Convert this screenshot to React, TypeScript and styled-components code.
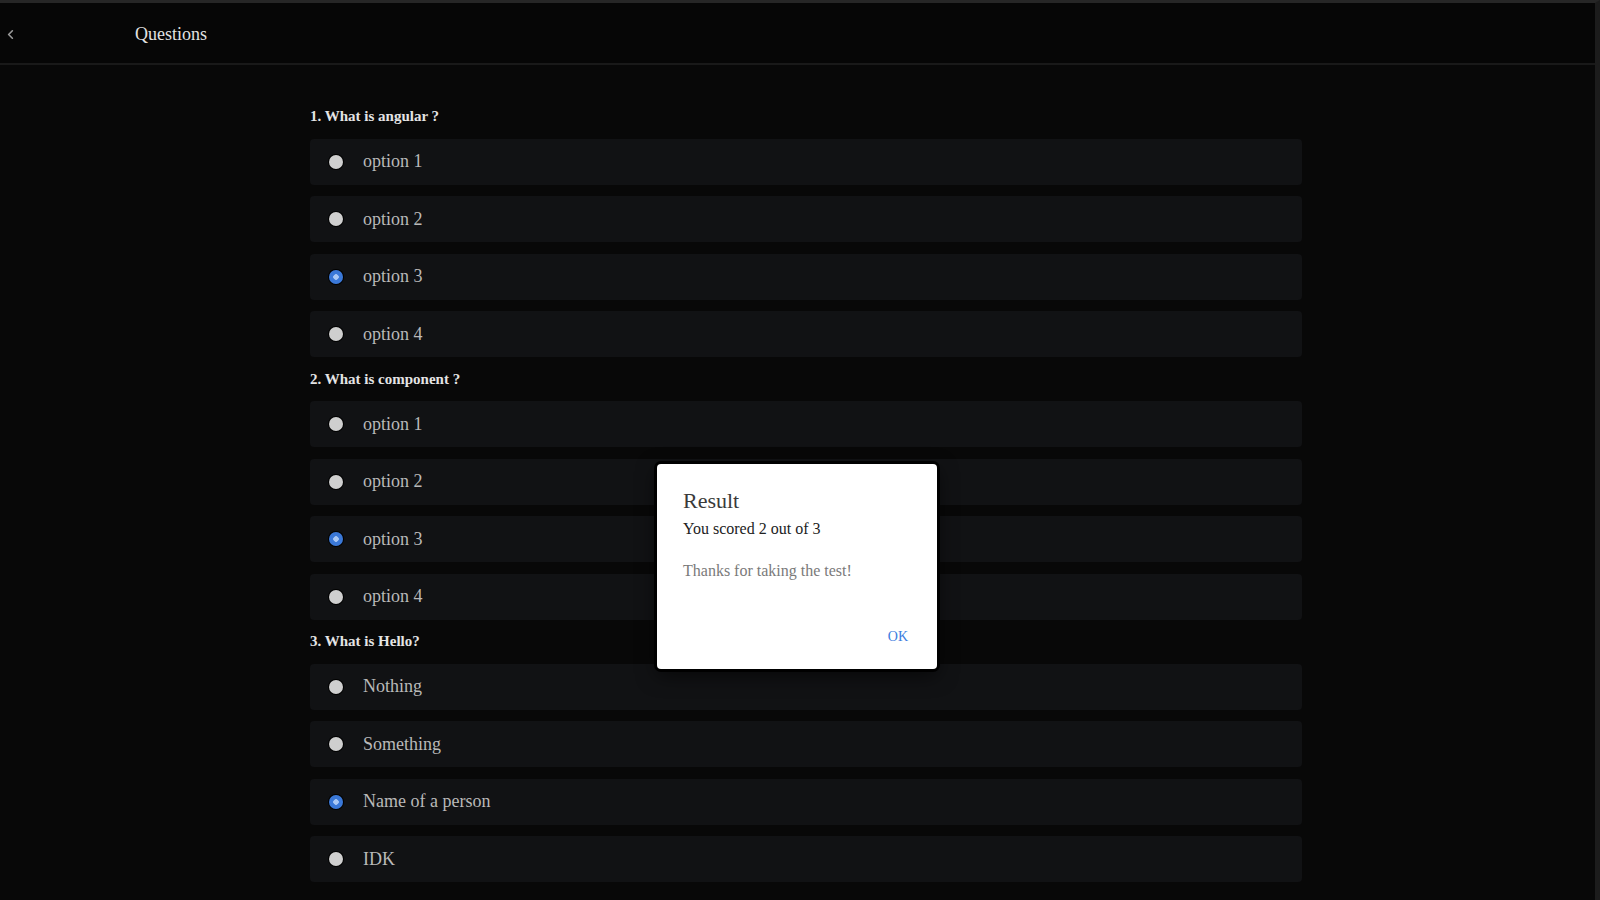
import styled, { createGlobalStyle } from 'styled-components';
import { ChevronLeft } from 'lucide-react';

const GlobalStyle = createGlobalStyle`
  html, body {
    margin: 0;
    padding: 0;
    background: #080808;
  }
  body {
    font-family: "Liberation Serif", "Times New Roman", serif;
  }
`;

type Question = {
  title: string;
  options: string[];
  answer: number;
};

const questions: Question[] = [
  { title: '1. What is angular ?', options: ['option 1', 'option 2', 'option 3', 'option 4'], answer: 2 },
  { title: '2. What is component ?', options: ['option 1', 'option 2', 'option 3', 'option 4'], answer: 2 },
  { title: '3. What is Hello?', options: ['Nothing', 'Something', 'Name of a person', 'IDK'], answer: 2 },
];

const App = () => {
  return (
    <Frame>
      <GlobalStyle />
      <Header>
        <BackButton aria-label="back">
          <ChevronLeft size={15} strokeWidth={2.6} />
        </BackButton>
        <HeaderTitle>Questions</HeaderTitle>
      </Header>
      <Content>
        {questions.map((q) => (
          <QuestionBlock key={q.title}>
            <QuestionTitle>{q.title}</QuestionTitle>
            {q.options.map((opt, i) => (
              <OptionRow key={opt}>
                <Radio type="radio" name={q.title} defaultChecked={i === q.answer} />
                <OptionLabel>{opt}</OptionLabel>
              </OptionRow>
            ))}
          </QuestionBlock>
        ))}
      </Content>
      <Alert role="dialog">
        <AlertTitle>Result</AlertTitle>
        <AlertSubTitle>You scored 2 out of 3</AlertSubTitle>
        <AlertMessage>Thanks for taking the test!</AlertMessage>
        <AlertButtons>
          <AlertButton>OK</AlertButton>
        </AlertButtons>
      </Alert>
    </Frame>
  );
};

export default App;

const Frame = styled.div`
  position: relative;
  width: 1600px;
  height: 900px;
  box-sizing: border-box;
  overflow: hidden;
  background: #080808;
  border-top: 3px solid #262626;
  border-right: 5px solid #1c1c1c;
`;

const Header = styled.header`
  height: 62px;
  box-sizing: border-box;
  padding-top: 2px;
  display: flex;
  align-items: center;
  background: #060606;
  border-bottom: 2px solid #191919;
`;

const BackButton = styled.button`
  width: 135px;
  height: 100%;
  padding: 0 0 0 3px;
  display: flex;
  align-items: center;
  background: none;
  border: none;
  color: #9a9a9a;
`;

const HeaderTitle = styled.div`
  font-size: 18px;
  color: #e2e2e2;
`;

const Content = styled.main`
  width: 992px;
  padding: 41px 0 0 310px;
`;

const QuestionBlock = styled.section`
  display: flex;
  flex-direction: column;
`;

const QuestionTitle = styled.div`
  font-size: 15px;
  font-weight: bold;
  line-height: 21px;
  color: #e4e4e4;
  margin-bottom: 11.5px;
`;

const OptionRow = styled.label`
  height: 46px;
  margin-bottom: 11.5px;
  display: flex;
  align-items: center;
  gap: 20px;
  padding-left: 19px;
  border-radius: 4px;
  background: #111214;
`;

const Radio = styled.input`
  appearance: none;
  margin: 0;
  width: 14px;
  height: 14px;
  border-radius: 50%;
  background: #cfcfcf;
  box-shadow: 0 0 0 1px #000;
  flex-shrink: 0;

  &:checked {
    background: radial-gradient(circle, #a9c8f5 0 2.5px, #3a78d8 3px);
  }
`;

const OptionLabel = styled.span`
  font-size: 18px;
  color: #b9b9b9;
`;

const Alert = styled.div`
  position: absolute;
  left: 657px;
  top: 461px;
  width: 280px;
  height: 205px;
  box-sizing: border-box;
  padding: 24px 24px 0 26px;
  display: flex;
  flex-direction: column;
  background: #ffffff;
  border-radius: 4px;
  box-shadow: 0 0 0 3px #000, 0 6px 20px rgba(0, 0, 0, 0.6);
`;

const AlertTitle = styled.div`
  font-size: 22px;
  line-height: 26px;
  color: #3a3a3a;
`;

const AlertSubTitle = styled.div`
  font-size: 16px;
  line-height: 22px;
  margin-top: 4px;
  color: #222222;
`;

const AlertMessage = styled.div`
  font-size: 16px;
  line-height: 22px;
  margin-top: 20px;
  color: #7a7a7a;
`;

const AlertButtons = styled.div`
  margin-top: auto;
  padding-bottom: 24px;
  display: flex;
  justify-content: flex-end;
`;

const AlertButton = styled.button`
  padding: 0 5px;
  background: none;
  border: none;
  font-family: "Liberation Serif", "Times New Roman", serif;
  font-size: 14px;
  color: #3b7de0;
`;
